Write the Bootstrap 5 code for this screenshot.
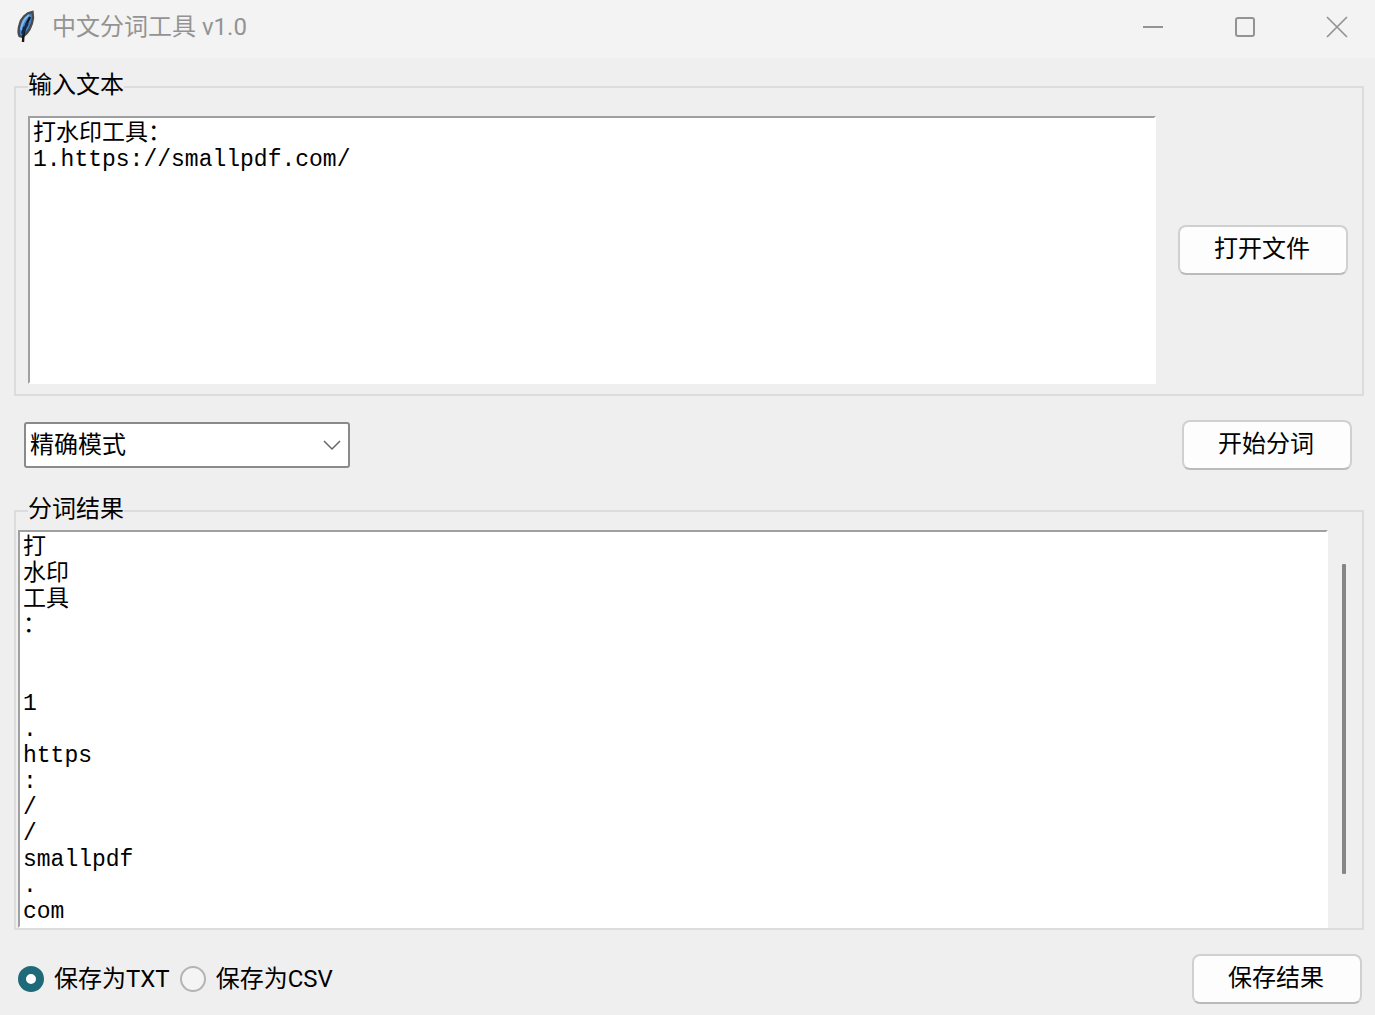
<!DOCTYPE html>
<html lang="zh-CN">
<head>
<meta charset="utf-8">
<meta name="viewport" content="width=device-width, initial-scale=1">
<title>中文分词工具 v1.0</title>
<link href="https://cdn.jsdelivr.net/npm/bootstrap@5.3.0/dist/css/bootstrap.min.css" rel="stylesheet">
<style>
body { background: #efefef; color: #000; font-family: Roboto, "Noto Sans CJK SC", sans-serif; font-size: 24px; line-height: 32px; }
.titlebar { background: #f3f3f3; color: #939393; height: 58px; padding: 0 14px 4px 14px; }
.titlebar h1 { font-size: 24px; line-height: 32px; font-weight: 400; margin-left: 14px; }
.win-btn { width: 48px; height: 48px; color: #939393; background: none; border: 0; padding: 0; }
.win-btn svg { display: block; margin: auto; }
.win-controls { gap: 44px; }
.main-area { padding: 13px 11px 11px 14px; }
.group-box { border: 2px solid #dcdcdc; min-width: 0; }
.group-box legend { float: none; width: auto; margin: 0; padding: 0 0 4px; font-size: 24px; line-height: 28px; }
.input-group-box { padding: 13px 14px 10px 12px; }
.result-group-box { padding: 3px 0 0 2px; }
.result-group-box legend { margin-left: 10px; }
.text-area { font-family: "Liberation Mono", "Noto Sans CJK SC", monospace; font-size: 23px; line-height: 26px; color: #000; background: #fff; border: 2px solid #fff; border-top-color: #a0a0a0; border-left-color: #a0a0a0; border-radius: 0; padding: 3px 3px 1px; resize: none; overflow: hidden; min-width: 0; }
.source-text { height: 268px; }
.open-btn { margin-left: 22px; }
.tool-btn { width: 170px; height: 50px; padding: 0 2px 2px 0; font-size: 24px; line-height: 32px; color: #000; background: #fdfdfd; border: 2px solid #d0d0d0; border-bottom-color: #bababa; border-radius: 8px; flex: none; }
.mode-select { width: 326px; height: 46px; padding: 0 40px 0 4px; font-size: 24px; line-height: 32px; color: #000; border: 2px solid #8a8a8a; border-radius: 3px; background-color: #fff; background-position: right 7px center; background-size: 18px 18px; background-image: url("data:image/svg+xml,%3Csvg xmlns='http://www.w3.org/2000/svg' viewBox='0 0 18 18'%3E%3Cpath d='M1 5l8 8 8-8' fill='none' stroke='%23666' stroke-width='1.5'/%3E%3C/svg%3E"); }
.mode-row { margin: 24px 12px 25px 10px; }
.save-row { margin: 24px 2px 0 4px; }
.scroll-track { width: 34px; padding: 34px 2px 54px 0; }
.scroll-thumb { width: 4px; background: #868686; border-radius: 1px; }
.save-choice { gap: 10px; }
.save-choice .form-check-input { width: 26px; height: 26px; margin: 0; float: none; border: 2px solid #b4b4b4; background-color: #f4f4f4; }
.save-choice .form-check-input:checked { border: 8px solid #1e6a79; background: #fff; }
</style>
<script src="https://cdn.jsdelivr.net/npm/bootstrap@5.3.0/dist/js/bootstrap.bundle.min.js"></script>
</head>
<body class="d-flex flex-column min-vh-100">
<header class="titlebar d-flex align-items-center">
  <svg class="flex-shrink-0" width="24" height="34" viewBox="0 0 24 34" aria-hidden="true">
    <path d="M18.500 2C12 3 7 8 5.500 15c-1 4-1.500 8 0 11l3 1C14 23 18 16 19 8z" fill="#4585cd" stroke="#4a4a4a" stroke-width="2.400"/>
    <path d="M15 5C10 9 7.500 14 7 20" fill="none" stroke="#84b7ed" stroke-width="2"/>
    <path d="M16 7C12 14 9 21 9 32" fill="none" stroke="#161616" stroke-width="2.400"/>
    <path d="M13.500 13l-2 4M10.500 17l-2 7" stroke="#172b46" stroke-width="3"/>
  </svg>
  <h1 class="mb-0 me-auto">中文分词工具 v1.0</h1>
  <div class="win-controls d-flex">
    <button type="button" class="win-btn" aria-label="最小化"><svg width="22" height="22" viewBox="0 0 22 22"><path d="M1 11h20" stroke="currentColor" stroke-width="2"/></svg></button>
    <button type="button" class="win-btn" aria-label="最大化"><svg width="22" height="22" viewBox="0 0 22 22"><rect x="2" y="2" width="18" height="18" rx="2" fill="none" stroke="currentColor" stroke-width="2"/></svg></button>
    <button type="button" class="win-btn" aria-label="关闭"><svg width="22" height="22" viewBox="0 0 22 22"><path d="M1 1l20 20M21 1L1 21" stroke="currentColor" stroke-width="1.700"/></svg></button>
  </div>
</header>
<main class="main-area d-flex flex-column flex-grow-1">
  <fieldset class="group-box input-group-box">
    <legend>输入文本</legend>
    <div class="d-flex align-items-center">
      <textarea class="text-area source-text flex-grow-1" aria-label="输入文本" spellcheck="false">打水印工具：
1.https://smallpdf.com/</textarea>
      <button type="button" class="btn tool-btn open-btn">打开文件</button>
    </div>
  </fieldset>
  <div class="mode-row d-flex align-items-center justify-content-between">
    <select class="form-select mode-select" aria-label="分词模式"><option selected>精确模式</option></select>
    <button type="button" class="btn tool-btn">开始分词</button>
  </div>
  <fieldset class="group-box result-group-box d-flex flex-column flex-grow-1">
    <legend>分词结果</legend>
    <div class="d-flex flex-grow-1">
      <textarea class="text-area flex-grow-1" rows="15" aria-label="分词结果" spellcheck="false" readonly>打
水印
工具
：


1
.
https
:
/
/
smallpdf
.
com</textarea>
      <div class="scroll-track d-flex justify-content-center"><div class="scroll-thumb"></div></div>
    </div>
  </fieldset>
  <div class="save-row d-flex align-items-center">
    <div class="save-choice d-flex align-items-center">
      <input class="form-check-input" type="radio" name="format" id="save-txt" checked>
      <label for="save-txt">保存为TXT</label>
      <input class="form-check-input" type="radio" name="format" id="save-csv">
      <label for="save-csv">保存为CSV</label>
    </div>
    <button type="button" class="btn tool-btn ms-auto">保存结果</button>
  </div>
</main>
</body>
</html>
